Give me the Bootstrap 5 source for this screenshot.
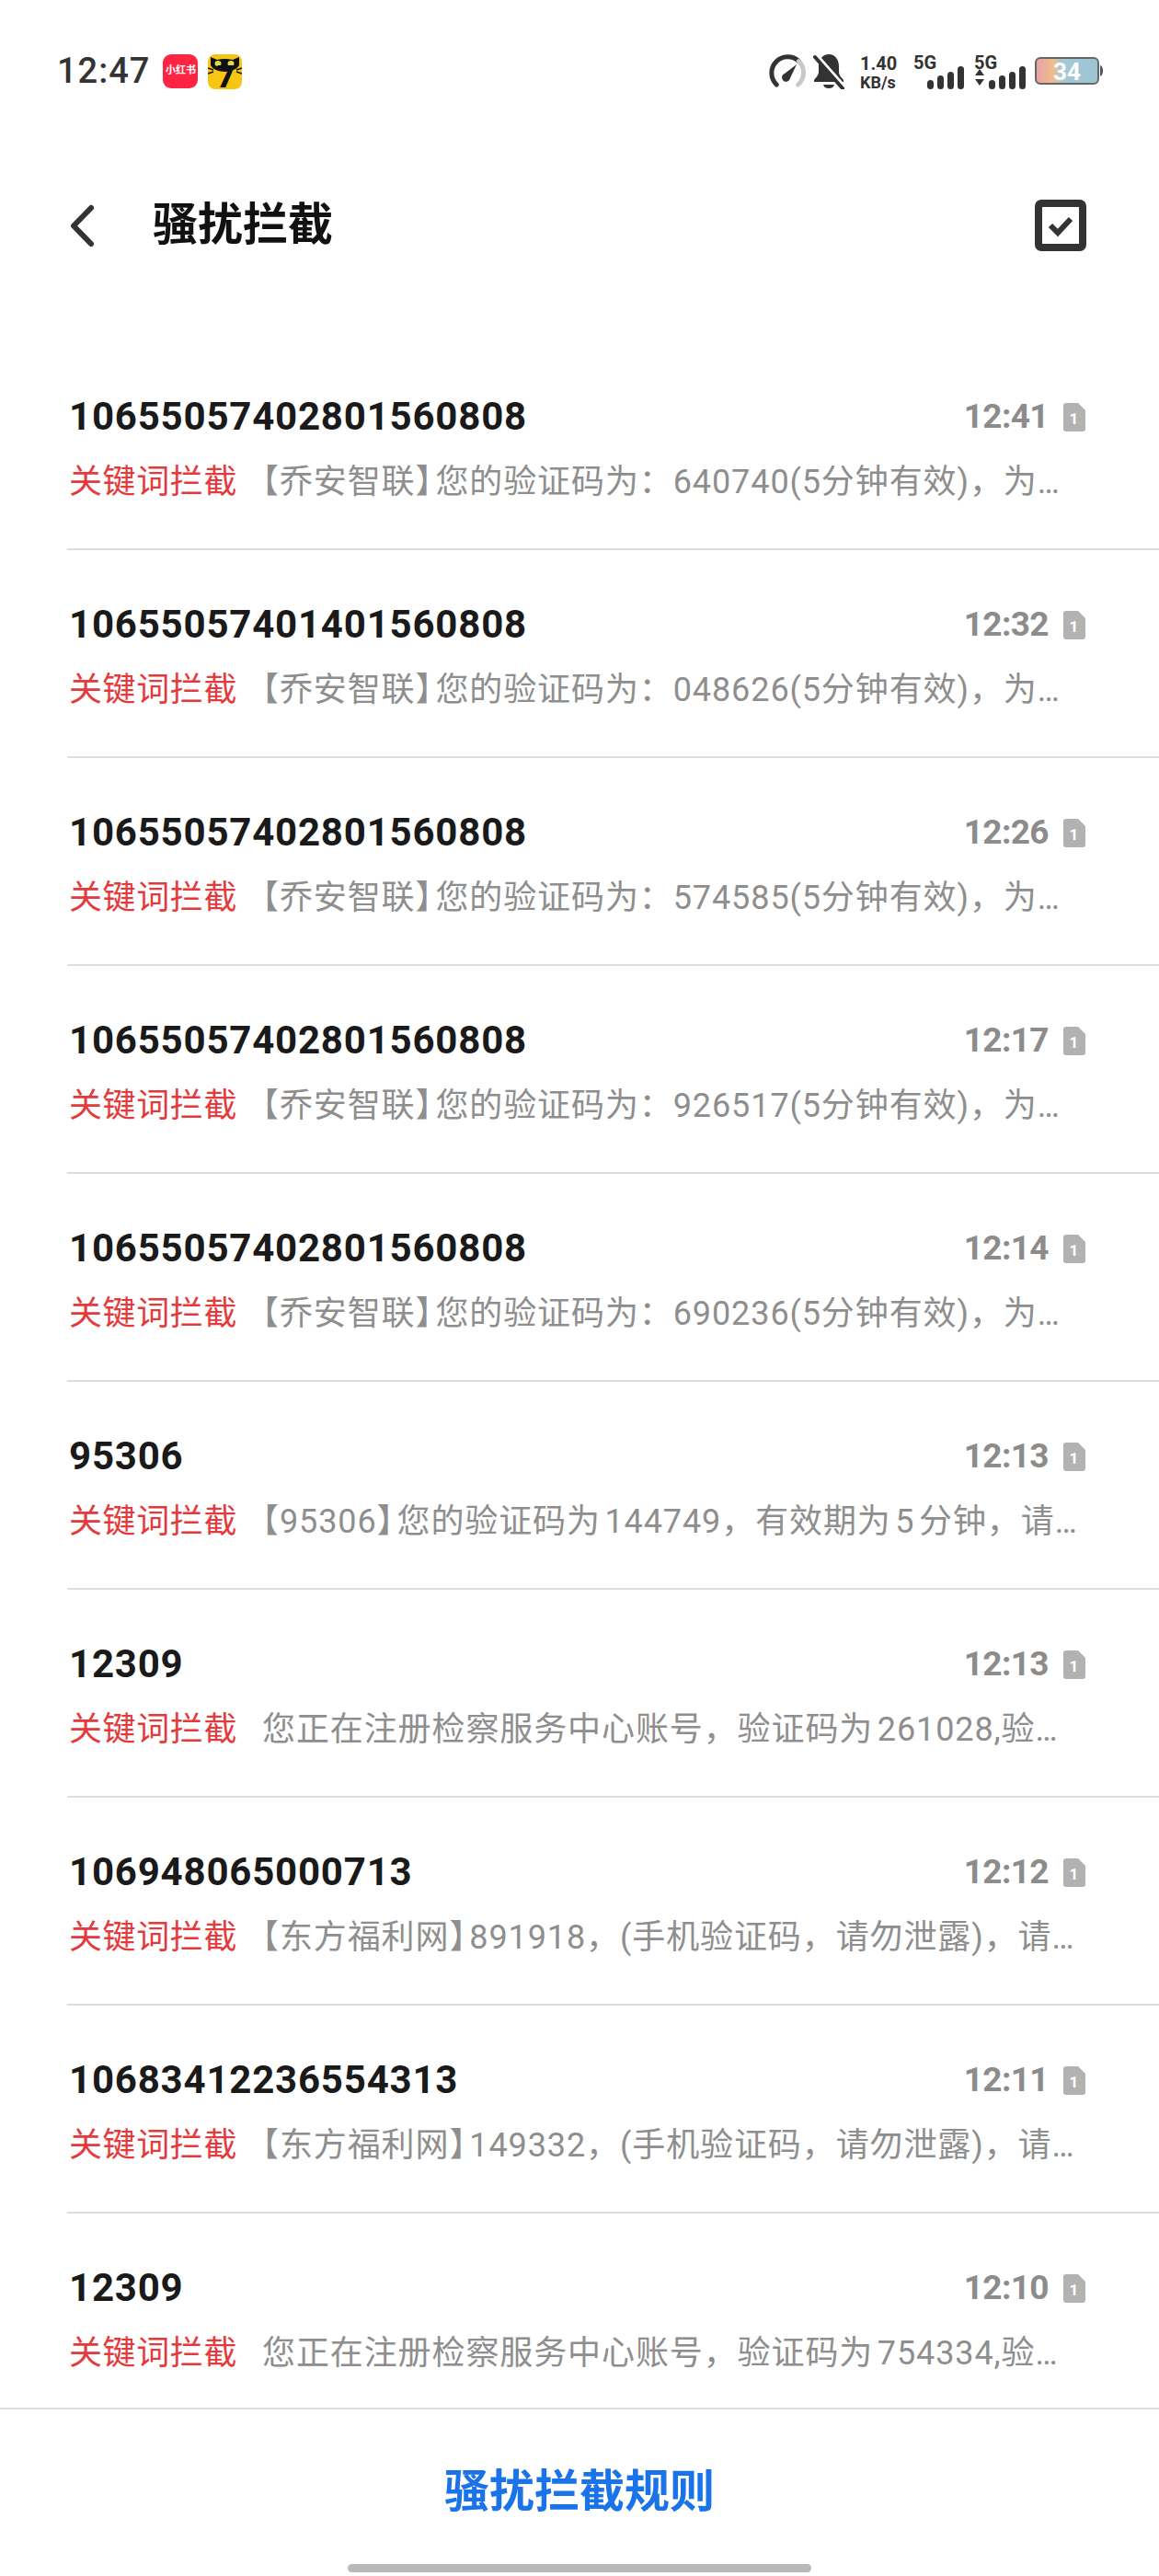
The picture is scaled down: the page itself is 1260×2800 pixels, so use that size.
<!DOCTYPE html>
<html lang="zh-CN">
<head>
    <meta charset="UTF-8">
    <meta name="viewport" content="width=device-width, initial-scale=1.0">
    <title>骚扰拦截</title>
    <link href="https://cdn.jsdelivr.net/npm/bootstrap@5.3.0/dist/css/bootstrap.min.css" rel="stylesheet">
    <style>
        body {
            background: #fff;
            font-family: Roboto, "Noto Sans CJK SC", sans-serif;
        }
        .phone-screen {
            width: 1260px;
            height: 2800px;
            overflow: hidden;
        }
        .status-row {
            height: 200px;
            padding: 59px 61px 0 62px;
        }
        .clock {
            font-size: 38px;
            line-height: 37px;
            font-weight: 500;
            letter-spacing: 1px;
            color: #333;
            margin-right: 14px;
        }
        .app-red {
            width: 38px;
            height: 37px;
            margin-right: 11px;
            border-radius: 9px;
            background: #ff2442;
            color: #fff;
            font-size: 11px;
            font-weight: 700;
            white-space: nowrap;
        }
        .net-speed {
            width: 58px;
            color: #333;
            font-weight: 700;
            text-align: left;
        }
        .net-speed div:first-child { font-size: 20px; line-height: 20px; }
        .net-speed div:last-child { font-size: 18px; line-height: 18px; margin-top: 2px; }
        .sig-label {
            position: absolute;
            top: 0;
            left: 0;
            font-size: 20px;
            line-height: 18px;
            font-weight: 700;
            color: #333;
        }
        .sig-wrap {
            position: relative;
            height: 38px;
        }
        .batt-num {
            position: absolute;
            inset: 0 4px 0 0;
            text-align: center;
            color: #fff;
            font-size: 26px;
            line-height: 32px;
            font-weight: 700;
        }
        .title-row {
            height: 90px;
            padding: 0 79px 0 75px;
        }
        .page-title {
            font-size: 49px;
            line-height: 60px;
            font-weight: 700;
            color: #111;
            margin: 0 0 0 63px;
        }
        .sms-list {
            margin-top: 82px;
            height: 2245px;
            overflow: hidden;
        }
        .sms-row {
            height: 226px;
            margin-left: 73px;
            padding: 56px 0 0 2px;
            border-bottom: 2px solid #dedede;
        }
        .sms-top {
            height: 50px;
            padding-right: 80px;
        }
        .sms-name {
            font-size: 42px;
            line-height: 50px;
            font-weight: 700;
            letter-spacing: .8px;
            color: #1a1a1a;
        }
        .sms-time {
            font-size: 37px;
            line-height: 50px;
            font-weight: 700;
            letter-spacing: -.6px;
            color: #8c8c8c;
        }
        .sim-mark {
            width: 24px;
            height: 31px;
            margin-left: 16px;
        }
        .sms-sub {
            margin-top: 21px;
            font-size: 36px;
            line-height: 50px;
            white-space: nowrap;
        }
        .tag-red {
            width: 210px;
            color: #e5393b;
            flex: none;
            letter-spacing: .6px;
        }
        .sms-text {
            color: #8e8e8e;
            letter-spacing: .9px;
        }
        .halfbr {
            font-feature-settings: "halt";
        }
        .halfbr-end {
            font-feature-settings: "halt";
            padding-right: 3px;
        }
        .bottom-bar {
            height: 183px;
            border-top: 2px solid #dedede;
            position: relative;
        }
        .rule-link {
            display: block;
            padding-top: 58px;
            font-size: 49px;
            line-height: 64px;
            font-weight: 700;
            color: #1a73e8;
            text-decoration: none;
            text-align: center;
        }
        .home-pill {
            position: absolute;
            left: 378px;
            bottom: 4px;
            width: 504px;
            height: 9px;
            border-radius: 5px;
            background: #b9b9b9;
        }
    </style>
</head>
<body>
    <div class="phone-screen d-flex flex-column">
        <div class="status-row d-flex align-items-start">
            <span class="clock">12:47</span>
            <div class="app-red flex-shrink-0 d-flex align-items-center justify-content-center"><span>小红书</span></div>
            <svg width="37" height="38" viewBox="0 0 37 38">
                <rect width="37" height="38" rx="8" fill="#f7c514"/>
                <path d="M3 3l7 3q8-2 17 0l7-3v9q-3 6-15 7h-1q-12-1-15-7z" fill="#111"/>
                <ellipse cx="11" cy="10" rx="3.500" ry="3" fill="#d6de4e"/>
                <ellipse cx="25" cy="10" rx="3.500" ry="3" fill="#d6de4e"/>
                <path d="M0 15l6 2M37 15l-6 2M0 21l6-2M37 21l-6-2" stroke="#111" stroke-width="1.500"/>
                <text x="19.500" y="36" text-anchor="middle" font-family="Roboto" font-weight="900" font-size="34" fill="#111">7</text>
            </svg>
            <div class="ms-auto d-flex align-items-start">
                <svg width="41" height="37" viewBox="0 0 41 37" class="me-2">
                    <path d="M9.300 33A17.500 17.500 0 0 1 33.400 7.600" fill="none" stroke="#333" stroke-width="5" stroke-linecap="round"/>
                    <path d="M33.400 7.600A17.500 17.500 0 0 1 32.700 33" fill="none" stroke="#c9c9c9" stroke-width="5" stroke-linecap="round"/>
                    <path d="M31 11L24 26a4.500 4.500 0 1 1-6-5z" fill="#333"/>
                </svg>
                <svg width="34" height="38" viewBox="0 0 34 38" style="margin-right:17px">
                    <path d="M17 0c7 0 11 6 11 13v6c0 4 3 6 5 9v2H1v-2c2-3 5-5 5-9v-6C6 6 10 0 17 0z" fill="#333"/>
                    <path d="M11 33h12c-1 3-3 4-6 4s-5-1-6-4z" fill="#333"/>
                    <path d="M3 1l31 35" stroke="#fff" stroke-width="5"/>
                    <path d="M2 3l30 34" stroke="#333" stroke-width="4" stroke-linecap="round"/>
                </svg>
                <div class="net-speed"><div>1.40</div><div>KB/s</div></div>
                <div class="sig-wrap" style="width:58px">
                    <span class="sig-label">5G</span>
                    <svg width="40" height="25" viewBox="0 0 40 25" class="position-absolute" style="left:15px;top:13px">
                        <g fill="#333"><rect x="0" y="15" width="7" height="10" rx="3.500"/><rect x="11" y="10" width="7" height="15" rx="3.500"/><rect x="22" y="6" width="7" height="19" rx="3.500"/><rect x="33" y="0" width="7" height="25" rx="3.500"/></g>
                    </svg>
                </div>
                <div class="sig-wrap ms-2" style="width:57px;margin-right:9px">
                    <span class="sig-label">5G</span>
                    <svg width="55" height="25" viewBox="0 0 55 25" class="position-absolute" style="left:1px;top:13px">
                        <path d="M0 10L5 3l5 7zM0 14h10l-5 7z" fill="#333"/>
                        <g fill="#333"><rect x="15" y="15" width="7" height="10" rx="3.500"/><rect x="26" y="10" width="7" height="15" rx="3.500"/><rect x="37" y="6" width="7" height="19" rx="3.500"/><rect x="48" y="0" width="7" height="25" rx="3.500"/></g>
                    </svg>
                </div>
                <div class="position-relative" style="margin-top:3px">
                    <svg width="74" height="32" viewBox="0 0 74 32" class="d-block">
                        <defs><linearGradient id="battFill"><stop offset="0" stop-color="#e8a0a6"/><stop offset=".28" stop-color="#f0bd8e"/><stop offset=".42" stop-color="#a5c8d6"/><stop offset="1" stop-color="#9ec4d4"/></linearGradient></defs>
                        <rect x="1" y="1" width="68" height="28" rx="5" fill="url(#battFill)" stroke="#666" stroke-width="2"/>
                        <path d="M71 9q3 1 3 6t-3 6z" fill="#555"/>
                    </svg>
                    <span class="batt-num">34</span>
                </div>
            </div>
        </div>

        <div class="title-row d-flex align-items-center">
            <svg width="28" height="47" viewBox="0 0 28 47">
                <path d="M24 4L5 23.500 24 43" fill="none" stroke="#333" stroke-width="6" stroke-linecap="round" stroke-linejoin="round"/>
            </svg>
            <h1 class="page-title">骚扰拦截</h1>
            <svg width="56" height="56" viewBox="0 0 56 56" class="ms-auto">
                <rect x="4" y="4" width="48" height="48" rx="3" fill="none" stroke="#333" stroke-width="8"/>
                <path d="M17 28l8 8 14-15" fill="none" stroke="#333" stroke-width="6"/>
            </svg>
        </div>

        <div class="sms-list" id="smsList"></div>

        <div class="bottom-bar">
            <a class="rule-link" href="#">骚扰拦截规则</a>
            <div class="home-pill"></div>
        </div>
    </div>

    <script>
        const br = (name) => `<span class="halfbr">【</span>${name}<span class="halfbr-end">】</span>`;
        const messages = [
            { name: '10655057402801560808', time: '12:41', text: `${br('乔安智联')}您的验证码为：640740(5分钟有效)，为…` },
            { name: '10655057401401560808', time: '12:32', text: `${br('乔安智联')}您的验证码为：048626(5分钟有效)，为…` },
            { name: '10655057402801560808', time: '12:26', text: `${br('乔安智联')}您的验证码为：574585(5分钟有效)，为…` },
            { name: '10655057402801560808', time: '12:17', text: `${br('乔安智联')}您的验证码为：926517(5分钟有效)，为…` },
            { name: '10655057402801560808', time: '12:14', text: `${br('乔安智联')}您的验证码为：690236(5分钟有效)，为…` },
            { name: '95306', time: '12:13', text: `${br('95306')}您的验证码为&#8202;144749，有效期为&#8202;5&#8202;分钟，请…` },
            { name: '12309', time: '12:13', text: '您正在注册检察服务中心账号，验证码为&#8202;261028,验…' },
            { name: '106948065000713', time: '12:12', text: `${br('东方福利网')}891918，(手机验证码，请勿泄露)，请…` },
            { name: '10683412236554313', time: '12:11', text: `${br('东方福利网')}149332，(手机验证码，请勿泄露)，请…` },
            { name: '12309', time: '12:10', text: '您正在注册检察服务中心账号，验证码为&#8202;754334,验…' }
        ];
        const simMark = `<svg class="sim-mark" viewBox="0 0 24 31">
            <path d="M3 0h13l8 8v20a3 3 0 0 1-3 3H3a3 3 0 0 1-3-3V3a3 3 0 0 1 3-3z" fill="#b2b2b2"/>
            <text x="11.500" y="23" text-anchor="middle" font-family="Roboto" font-weight="700" font-size="17" fill="#fff">1</text>
        </svg>`;
        document.getElementById('smsList').innerHTML = messages.map((m) => `
            <div class="sms-row">
                <div class="sms-top d-flex align-items-center">
                    <span class="sms-name">${m.name}</span>
                    <span class="sms-time ms-auto">${m.time}</span>
                    ${simMark}
                </div>
                <div class="sms-sub d-flex">
                    <span class="tag-red">关键词拦截</span>
                    <span class="sms-text">${m.text}</span>
                </div>
            </div>`).join('');
    </script>
    <script src="https://cdn.jsdelivr.net/npm/bootstrap@5.3.0/dist/js/bootstrap.bundle.min.js"></script>
</body>
</html>
